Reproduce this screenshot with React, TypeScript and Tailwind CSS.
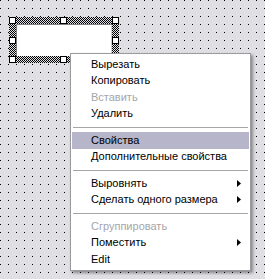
import React from "react";

type Item =
  | { kind: "item"; label: string; disabled?: boolean; active?: boolean; sub?: boolean }
  | { kind: "sep" };

const items: Item[] = [
  { kind: "item", label: "Вырезать" },
  { kind: "item", label: "Копировать" },
  { kind: "item", label: "Вставить", disabled: true },
  { kind: "item", label: "Удалить" },
  { kind: "sep" },
  { kind: "item", label: "Свойства", active: true },
  { kind: "item", label: "Дополнительные свойства" },
  { kind: "sep" },
  { kind: "item", label: "Выровнять", sub: true },
  { kind: "item", label: "Сделать одного размера", sub: true },
  { kind: "sep" },
  { kind: "item", label: "Сгруппировать", disabled: true },
  { kind: "item", label: "Поместить", sub: true },
  { kind: "item", label: "Edit" },
];

function Canvas() {
  const handles = [
    [9, 17], [60, 17], [112, 17],
    [9, 37], [112, 37],
    [9, 56], [60, 56], [112, 56],
  ];
  return (
    <svg width="265" height="279" className="block">
      <defs>
        <pattern id="grid" width="8" height="8" patternUnits="userSpaceOnUse">
          <rect x="0" y="0" width="1" height="1" fill="#000" />
        </pattern>
        <pattern id="hatch" width="2" height="2" patternUnits="userSpaceOnUse">
          <rect width="2" height="2" fill="#e0dfe4" />
          <rect x="0" y="0" width="1" height="1" fill="#000" />
          <rect x="1" y="1" width="1" height="1" fill="#000" />
        </pattern>
      </defs>
      <rect width="265" height="279" fill="#e0dfe4" />
      <rect width="265" height="279" fill="url(#grid)" />
      {/* selection frame */}
      <rect x="9" y="17" width="110" height="46" fill="url(#hatch)" />
      <rect x="16" y="24" width="96" height="32" fill="#fff" />
      <line x1="16" y1="24.5" x2="112" y2="24.5" stroke="#808080" />
      <line x1="16.5" y1="24" x2="16.5" y2="56" stroke="#808080" />
      <line x1="111.5" y1="25" x2="111.5" y2="56" stroke="#d4d0c8" />
      {handles.map(([x, y], i) => (
        <rect key={i} x={x + 0.5} y={y + 0.5} width="6" height="6" fill="#fff" stroke="#000" />
      ))}
    </svg>
  );
}

export default function App() {
  return (
    <div className="relative w-[265px] h-[279px] overflow-hidden bg-[#e0dfe4] font-['Liberation_Sans',Arial,sans-serif]">
      <Canvas />
      <div className="absolute left-[70px] top-[53px] w-[181px] bg-white border border-[#9a9a9e] py-[2px] px-[1px] shadow-[2px_2px_3px_rgba(0,0,0,0.4)]">
        {items.map((it, i) =>
          it.kind === "sep" ? (
            <div key={i} className="h-[10px] flex items-center px-[1px]">
              <div className="h-px w-full bg-[#a6a5aa]" />
            </div>
          ) : (
            <div
              key={i}
              className={`h-[16.5px] flex items-center pl-[19px] pr-[8px] text-[11px] leading-none ${
                it.active ? "bg-[#b6b5c9]" : ""
              } ${it.disabled ? "text-[#a6a5aa]" : "text-black"}`}
            >
              <span className="flex-1 whitespace-nowrap">{it.label}</span>
              {it.sub && (
                <svg width="4" height="7" viewBox="0 0 4 7">
                  <path d="M0 0 L4 3.5 L0 7 Z" fill="#000" />
                </svg>
              )}
            </div>
          )
        )}
      </div>
    </div>
  );
}
